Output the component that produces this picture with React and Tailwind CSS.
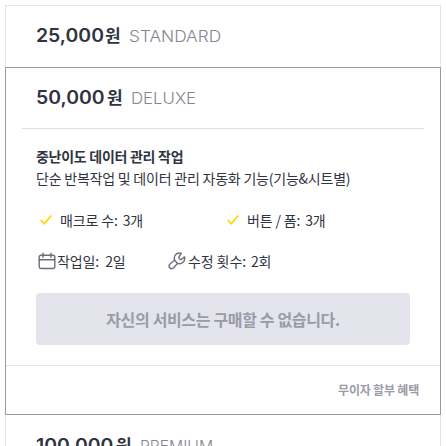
const latin = "font-['Inter','Noto_Sans_CJK_KR',sans-serif]";

function Price({ amount, plan, className = "", amountClass = "", planClass = "scale-x-[1.08]" }) {
  return (
    <div className={`flex items-center whitespace-nowrap pl-[30px] ${latin} ${className}`}>
      <span className={`text-[18.500px] font-semibold text-[#303441] ${amountClass}`}>
        <span className="inline-block origin-left scale-x-[1.05]">{amount}</span>
      </span>
      <span className="pb-[3px] text-[17px] font-bold text-[#303441] font-['Noto_Sans_CJK_KR',sans-serif]">원</span>
      <span className="ml-[8px] text-[16px] font-light text-[#858693]">
        <span className={`inline-block origin-left ${planClass}`}>{plan}</span>
      </span>
    </div>
  );
}

function Check() {
  return (
    <svg className="mr-[8px] h-[12px] w-[12px]" viewBox="0 0 12 12" fill="none" stroke="#ffd400" strokeWidth="1.7">
      <path d="M.8 6 4.3 9.7 11.2 1.500" />
    </svg>
  );
}

function Calendar() {
  return (
    <svg className="mr-px h-[18px] w-[18px]" viewBox="0 0 18 18" fill="none" stroke="#6a6d7c" strokeWidth="1.4" strokeLinecap="round">
      <rect x="1.2" y="3.200" width="15.6" height="13.300" rx="2" />
      <path d="M1.2 7.7h15.6M5 1.2v4M13 1.2v4" />
    </svg>
  );
}

function Wrench() {
  return (
    <svg className="h-[18px] w-[18px]" viewBox="0 0 18 18" fill="none" stroke="#6a6d7c" strokeWidth="1.4" strokeLinejoin="round" strokeLinecap="round">
      <path d="M13.300 1.400C10 .200 6.300 2.300 6.200 6.200c0 .800.200 1.500.400 2.100L2 12c-2.500 2.500.900 6.200 3.600 3.800l4-4.400c4 1.300 7.900-2 7-6.500l-3.100 2.400c-1.500.8-3.300-1.100-2.400-2.600Z" />
      <path d="m6.600 8.300 3 3.100" />
    </svg>
  );
}

export default function App() {
  return (
    <div className="h-[446px] w-[446px] overflow-hidden bg-white pl-[5px] pt-[5px] font-['Noto_Sans_CJK_KR',sans-serif] text-[#303441]">
      <div className="h-[460px] w-[436px] border border-[#e4e4ed]">
        <Price amount="25,000" plan="STANDARD" className="h-[60px]" amountClass="w-[69px]" />
        <section className="-mx-px mt-px h-[348px] border border-[#9a9ba7]">
          <Price amount="50,000" plan="DELUXE" className="h-[60px]" amountClass="w-[71px]" planClass="scale-x-[1.05]" />
          <div className="mx-4 h-px bg-[#dedfe2]" />
          <div className="h-[164px] whitespace-nowrap px-[30px] pt-[16px] text-[14px]">
            <h2 className="h-[22px] text-[14px] font-bold leading-[22px] tracking-[-0.28px]">중난이도 데이터 관리 작업</h2>
            <p className="h-[22px] leading-[22px] tracking-[-0.22px]">단순 반복작업 및 데이터 관리 자동화 기능(기능&amp;시트별)</p>
            <div className="mt-[20px] grid h-[22px] grid-cols-2 tracking-[-0.150px]">
              <div className="flex items-center pl-[4px]"><Check />매크로 수:<span className="ml-[5px]">3개</span></div>
              <div className="flex items-center pl-[4px]"><Check />버튼 / 폼:<span className="ml-[5px]">3개</span></div>
            </div>
            <div className="mt-[19px] flex h-[22px] tracking-[-0.100px]">
              <div className="flex w-[132px] items-center pl-[2px]"><Calendar />작업일:<span className="ml-[6px]">2일</span></div>
              <div className="flex items-center"><Wrench /><span className="ml-[2px]">수정 횟수:</span><span className="ml-[5px]">2회</span></div>
            </div>
          </div>
          <button className="mx-[30px] block h-[52px] w-[374px] rounded-[4px] bg-[#e4e4ed] text-[16px] font-bold tracking-[-0.350px] text-[#9a9ba7]">자신의 서비스는 구매할 수 없습니다.</button>
          <div className="mt-[20px] flex h-[49px] items-center justify-end border-t border-[#e4e4ed] pr-[21px] text-[12px] font-bold tracking-[-0.200px] text-[#9a9ba7]">무이자 할부 혜택</div>
        </section>
        <Price amount="100,000" plan="PREMIUM" className="h-[62px]" amountClass="w-[80px]" planClass="scale-x-[.98]" />
      </div>
    </div>
  );
}
